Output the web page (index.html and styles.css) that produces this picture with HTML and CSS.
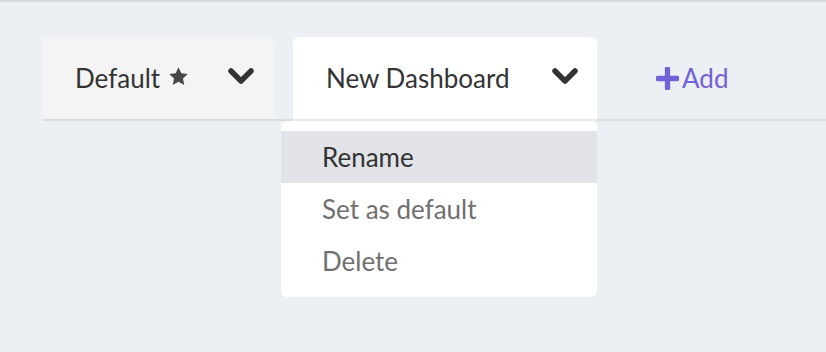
FILE: index.html
```html
<!DOCTYPE html>
<html lang="en">

<head>
    <link rel="stylesheet" href="styles.css">
</head>

<body>
    <div class="top-bar"></div>
    <section class="dash">
        <div class="tabs">
            <div class="tab">
                <span class="tab-name">Default
                    <svg class="star" viewBox="0 0 24 24" width="21" height="21">
                        <path d="M12 1.5l3.2 6.9 7.4.8-5.5 5.1 1.5 7.4L12 17.9l-6.6 3.8 1.5-7.4L1.4 9.2l7.4-.8z" />
                    </svg>
                </span>
                <svg class="chevron" viewBox="0 0 26 16" width="26" height="16">
                    <path d="M3 3l10 10L23 3" />
                </svg>
            </div>
            <div class="tab tab-active">
                <span class="tab-name">New Dashboard</span>
                <svg class="chevron" viewBox="0 0 26 16" width="26" height="16">
                    <path d="M3 3l10 10L23 3" />
                </svg>
                <ul class="menu">
                    <li class="menu-item hover">Rename</li>
                    <li class="menu-item">Set as default</li>
                    <li class="menu-item">Delete</li>
                </ul>
            </div>
            <a class="add" href="#">
                <svg class="plus" viewBox="0 0 24 24" width="23" height="23">
                    <path d="M12 2v20M2 12h20" />
                </svg>Add</a>
        </div>
    </section>
</body>

</html>
```

FILE: styles.css
```css
body {
    margin: 0;
    background: #eceff4;
    font-family: "Lato", sans-serif;
    height: 352px;
    overflow: hidden;
}

.top-bar {
    height: 2px;
    background: #d9d9d9;
}

.dash {
    padding: 35px 0 0 42px;
}

.tabs {
    display: flex;
    align-items: stretch;
    gap: 20px;
    border-bottom: 2px solid #dcdcdc;
}

.tab {
    display: flex;
    align-items: center;
    justify-content: space-between;
    height: 82px;
    box-sizing: border-box;
    padding: 0 19px 0 33px;
    background: #f4f4f4;
    border-radius: 6px 6px 0 0;
    font-size: 26px;
    color: #333;
    width: 231px;
}

.tab-active {
    position: relative;
    background: #fff;
    width: 304px;
    margin-bottom: -2px;
    height: 84px;
    border-bottom: 2px solid #ececec;
}

.tab-name {
    display: flex;
    align-items: center;
    gap: 8px;
}

.star {
    fill: #474747;
    margin-top: -3px;
}

.chevron {
    fill: none;
    stroke: #333;
    stroke-width: 5.5;
    stroke-linecap: round;
    stroke-linejoin: round;
    margin-top: -4px;
}

.menu {
    position: absolute;
    top: 84px;
    left: -12px;
    right: 0;
    margin: 0;
    padding: 10px 0;
    list-style: none;
    background: #fff;
    border-radius: 6px;
}

.menu-item {
    height: 52px;
    line-height: 52px;
    padding-left: 41px;
    font-size: 26px;
    color: #707070;
}

.menu-item.hover {
    background: #e2e3e8;
    color: #333;
}

.add {
    display: flex;
    align-items: center;
    gap: 3px;
    margin-left: 39px;
    font-size: 26px;
    color: #7262d6;
    text-decoration: none;
}

.plus {
    fill: none;
    stroke: #7262d6;
    stroke-width: 5.5;
    stroke-linecap: round;
}
```
